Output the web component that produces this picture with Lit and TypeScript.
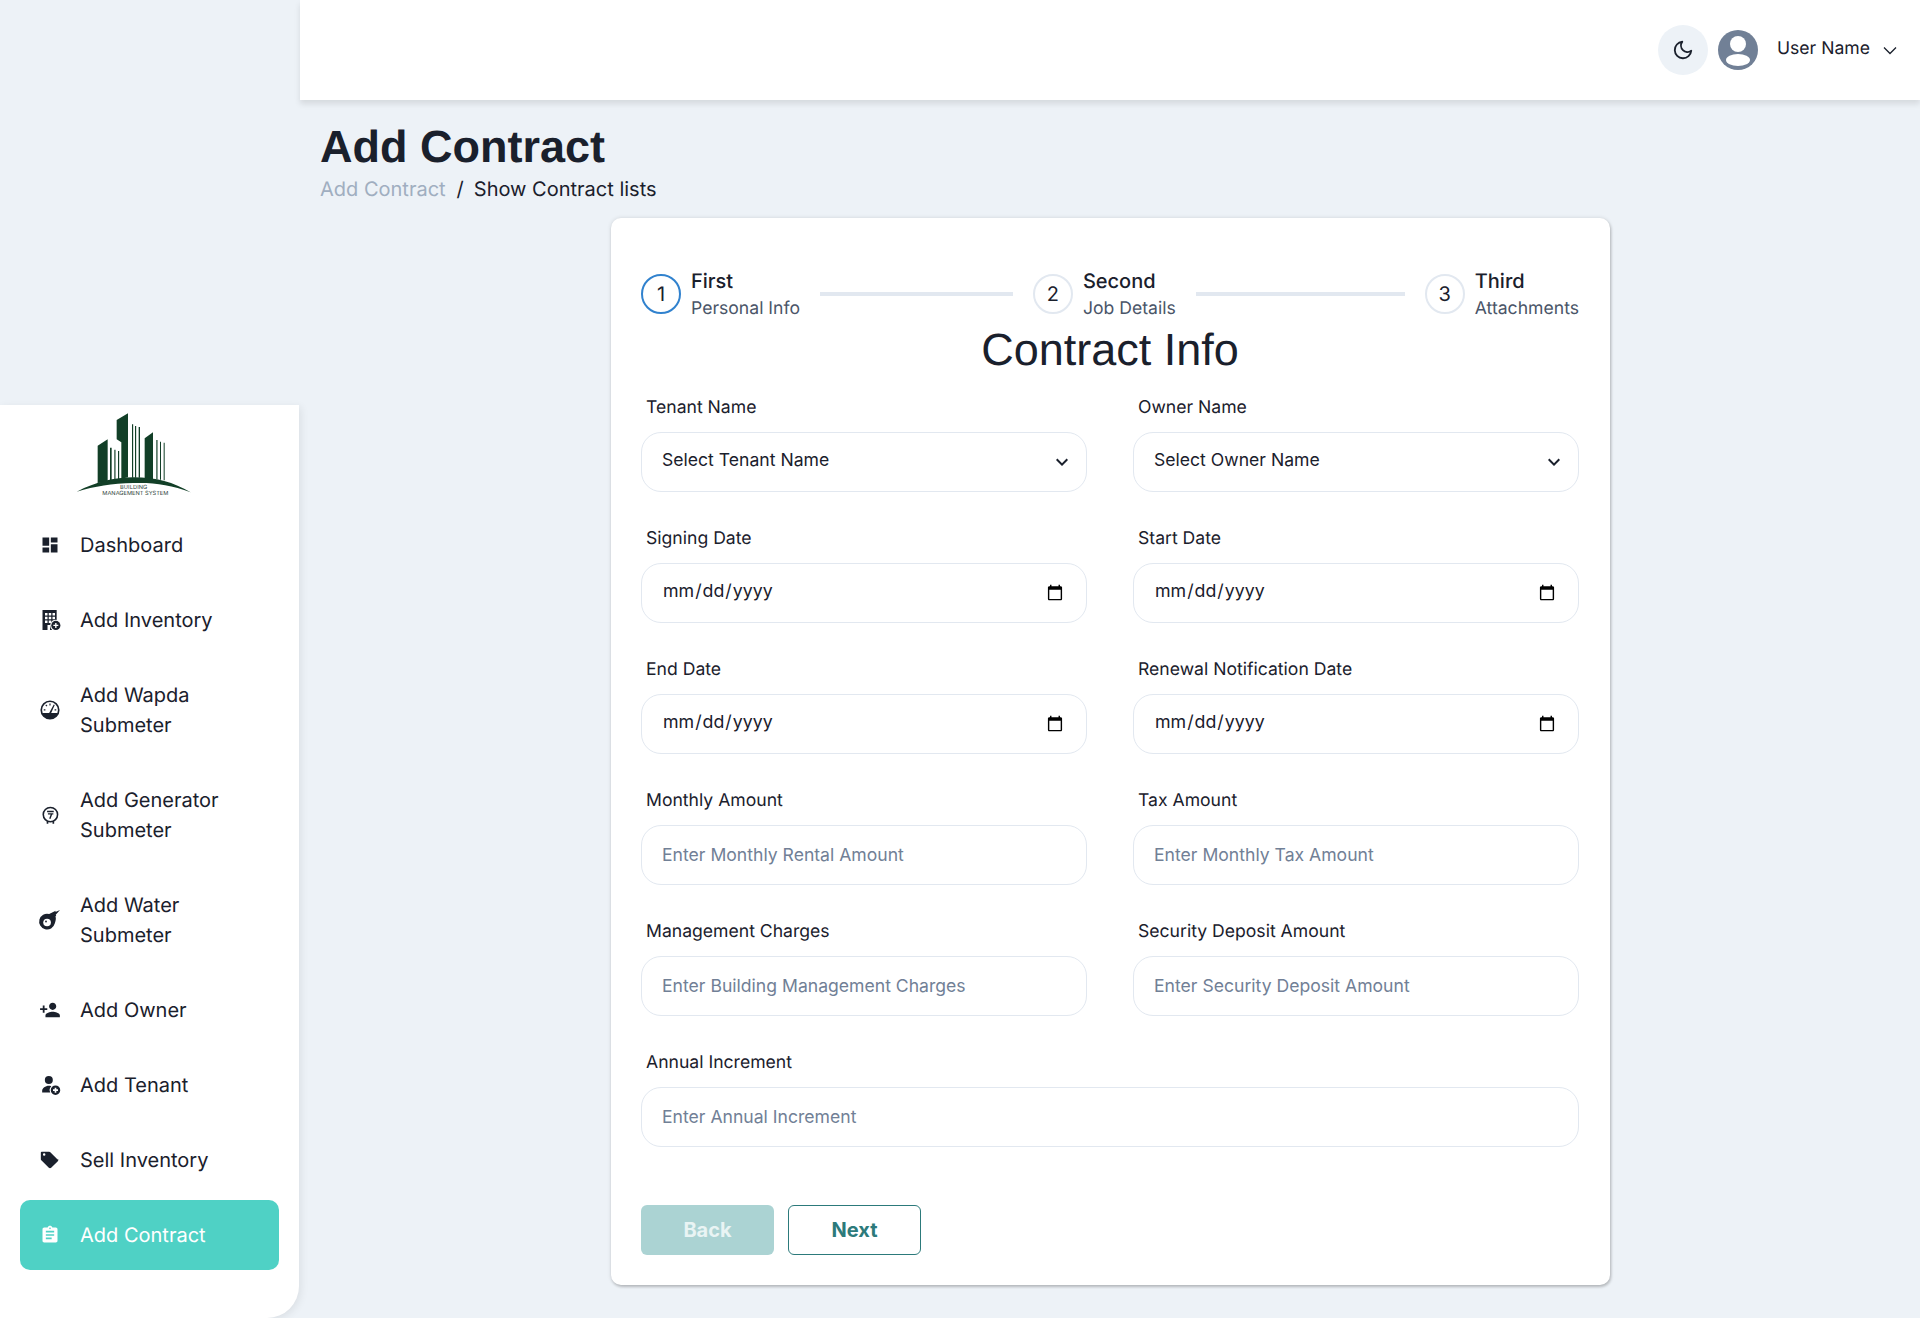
import { LitElement, html, css, svg } from 'lit';
import { customElement } from 'lit/decorators.js';

const ICONS: Record<string, unknown> = {
  dashboard: svg`<path d="M3 13h8V3H3v10zm0 8h8v-6H3v6zm10 0h8V11h-8v10zm0-18v6h8V3h-8z"/>`,
  building: svg`<g transform="translate(1 0)"><path fill-rule="evenodd" d="M2 0h17v24H2zM5 3.500v3h3v-3zm4.500 0v3h3v-3zm4.500 0v3h3v-3zM5 8v3h3V8zm4.500 0v3h3V8zM14 8v3h3V8zM5 12.500v3h3v-3zm4.500 0v3h3v-3zM14 12.500v3h3v-3zM8 18v6h3v-6z"/>
    <circle cx="18" cy="18.500" r="6.800" fill="#fff"/><circle cx="18" cy="18.500" r="5.500"/>
    <path fill="#fff" d="M17.200 15.500h1.600v2.200H21v1.600h-2.200v2.200h-1.600v-2.200H15v-1.600h2.200z"/></g>`,
  gauge: svg`<circle cx="12" cy="12" r="10.500" fill="none" stroke="currentColor" stroke-width="2"/>
    <path d="M2.500 15.500h19a10.300 10.300 0 0 1-19 0zM11 15.500l5.500-10 1.200.6-4.300 9.400z"/>
    <path d="M4.500 11h2v1.500h-2zM17.500 11h2v1.500h-2zM11.300 4.300h1.400v2.200h-1.400zM6.400 6.400l1-1 1.500 1.500-1 1z"/>`,
  rupee: svg`<g transform="translate(1 0)"><circle cx="11.500" cy="11.500" r="8.600" fill="none" stroke="currentColor" stroke-width="1.900"/>
    <path fill="none" stroke="currentColor" stroke-width="1.700" d="M7.500 7.800h8M8.500 10.600h6.500M12.800 11l-2 5.500"/>
    <path d="M7 19.500h2v3H7zM14 19.500h2v3h-2z"/></g>`,
  water: svg`<g transform="translate(1 0)"><path d="M23 0l-5.500 2.300.3-1.300L10 4.800a9.500 9.500 0 1 0 6.700 11.500c1-3 2-6 .8-8.800l1-.4-.6-1.500z"/>
    <circle cx="7.500" cy="15" r="4.600" fill="#fff"/><circle cx="6.200" cy="13.800" r="1.100"/></g>`,
  owner: svg`<path transform="translate(-1 -1) scale(1.080)" d="M15 12c2.200 0 4-1.800 4-4s-1.800-4-4-4-4 1.800-4 4 1.800 4 4 4zm-9-2V7H4v3H1v2h3v3h2v-3h3v-2H6zm9 4c-2.700 0-8 1.300-8 4v2h16v-2c0-2.700-5.300-4-8-4z"/>`,
  tenant: svg`<g transform="translate(.6 0)"><circle cx="10" cy="6" r="4.800"/><path d="M2 21v-2c0-3 4-6 8-6 1 0 2 .1 3 .4A6.500 6.500 0 0 0 11.700 21z"/>
    <path fill-rule="evenodd" d="M18 12.500a5.700 5.700 0 1 0 0 11.400 5.700 5.700 0 0 0 0-11.400zm-1 2.700h2v2h2v2h-2v2h-2v-2h-2v-2h2z"/></g>`,
  tag: svg`<path fill-rule="evenodd" d="M21.400 11.600l-9-9C12 2.200 11.500 2 11 2H2c-.6 0-1 .4-1 1v8c0 .6.200 1 .6 1.400l9 9c.4.400.9.600 1.400.600s1-.2 1.400-.6l8-8c.4-.4.600-.9.600-1.400s-.2-1-.6-1.400zM5 7a1.500 1.500 0 1 1 0-3 1.500 1.500 0 0 1 0 3z"/>`,
  clipboard: svg`<path d="M19 3h-4.200C14.400 1.800 13.300 1 12 1s-2.400.8-2.800 2H5c-1.100 0-2 .9-2 2v14c0 1.100.9 2 2 2h14c1.100 0 2-.9 2-2V5c0-1.100-.9-2-2-2zm-7 0c.6 0 1 .4 1 1s-.4 1-1 1-1-.4-1-1 .4-1 1-1zm2 14H7v-2h7v2zm3-4H7v-2h10v2zm0-4H7V7h10v2z"/>`,
};

type NavItem = { label: string; icon: string; active?: boolean };

const NAV: NavItem[] = [
  { label: 'Dashboard', icon: 'dashboard' },
  { label: 'Add Inventory', icon: 'building' },
  { label: 'Add Wapda Submeter', icon: 'gauge' },
  { label: 'Add Generator Submeter', icon: 'rupee' },
  { label: 'Add Water Submeter', icon: 'water' },
  { label: 'Add Owner', icon: 'owner' },
  { label: 'Add Tenant', icon: 'tenant' },
  { label: 'Sell Inventory', icon: 'tag' },
  { label: 'Add Contract', icon: 'clipboard', active: true },
];

const STEPS = [
  { title: 'First', sub: 'Personal Info' },
  { title: 'Second', sub: 'Job Details' },
  { title: 'Third', sub: 'Attachments' },
];

@customElement('app-root')
export class AppRoot extends LitElement {
  static styles = css`
    :host {
      display: block;
      width: 1920px;
      height: 1318px;
      overflow: hidden;
      background: #edf2f7;
      color: #1a202c;
      font-family: Inter, 'Liberation Sans', sans-serif;
      text-rendering: geometricPrecision;
    }
    .shell {
      display: flex;
      align-items: flex-start;
      height: 1318px;
    }
    .sidebar {
      flex: none;
      width: 299px;
      height: 913px;
      margin-top: 405px;
      padding: 0 20px;
      box-sizing: border-box;
      background: #fff;
      border-bottom-right-radius: 32px;
      box-shadow: 2px 2px 8px rgba(0, 0, 0, 0.08);
    }
    .logo {
      display: block;
      width: 150px;
      height: 100px;
      margin: 0 0 5px 40px;
    }
    .nav {
      display: flex;
      flex-direction: column;
      gap: 5px;
    }
    .nav-item {
      display: flex;
      align-items: center;
      gap: 20px;
      min-height: 70px;
      padding: 20px;
      box-sizing: border-box;
      border-radius: 10px;
      font-size: 20px;
      line-height: 30px;
    }
    .nav-item svg {
      flex: none;
      width: 20px;
      height: 20px;
      fill: currentColor;
      overflow: visible;
    }
    .nav-item.active {
      background: #4fd1c5;
      color: #fff;
    }
    .main {
      flex: 1;
      min-width: 0;
      margin-left: 1px;
    }
    .topbar {
      display: flex;
      align-items: center;
      justify-content: flex-end;
      height: 100px;
      padding-right: 22px;
      background: #fff;
      box-shadow: 0 4px 6px rgba(0, 0, 0, 0.1);
    }
    .moon {
      display: flex;
      align-items: center;
      justify-content: center;
      width: 50px;
      height: 50px;
      border-radius: 50%;
      background: #edf2f7;
    }
    .moon svg {
      width: 22px;
      height: 22px;
    }
    .avatar {
      width: 40px;
      height: 40px;
      margin-left: 10px;
    }
    .user {
      margin-left: 19px;
      margin-top: -4px;
      font-size: 17.6px;
      line-height: 27px;
    }
    .chev {
      width: 16px;
      height: 16px;
      margin-left: 12px;
    }
    .content {
      padding: 23px 0 0 20px;
    }
    h1 {
      margin: 0;
      font: 700 45px/48px 'Liberation Sans', Arial, sans-serif;
    }
    .crumbs {
      display: flex;
      gap: 10px;
      margin-top: 3px;
      font-size: 20px;
      line-height: 30px;
    }
    .crumbs .dim {
      margin-right: 1px;
      color: #a0aec0;
    }
    .card {
      width: 999px;
      height: 1067px;
      margin: 14px 0 0 291px;
      padding: 46px 31px 0 30px;
      box-sizing: border-box;
      background: #fff;
      border-radius: 10px;
      box-shadow: 0 0 4px rgba(0, 0, 0, 0.12), 1px 2px 3px rgba(0, 0, 0, 0.2);
    }
    .steps {
      display: flex;
      align-items: center;
      height: 60px;
    }
    .step {
      display: flex;
      align-items: center;
      gap: 10px;
      flex: 1;
    }
    .step:last-child {
      flex: none;
    }
    .num {
      display: flex;
      flex: none;
      align-items: center;
      justify-content: center;
      width: 40px;
      height: 40px;
      box-sizing: border-box;
      border: 2px solid #e2e8f0;
      border-radius: 50%;
      font-size: 20px;
    }
    .step.current .num {
      border-color: #3182ce;
    }
    .step-title {
      padding-top: 1px;
      font-size: 20px;
      line-height: 27px;
      font-weight: 500;
    }
    .step-sub {
      padding-top: 1px;
      font-size: 17.6px;
      line-height: 26px;
      color: #4a5568;
    }
    .sep {
      flex: 1;
      height: 4px;
      margin: 0 20px 0 10px;
      background: #e2e8f0;
    }
    h2 {
      margin: 0;
      padding-top: 1px;
      text-align: center;
      font: 400 45px/50px 'Liberation Sans', Arial, sans-serif;
    }
    .grid {
      display: grid;
      grid-template-columns: 446px 446px;
      column-gap: 46px;
      row-gap: 33.1px;
      margin-top: 19px;
    }
    .field.wide {
      grid-column: 1 / 3;
    }
    label {
      display: block;
      padding-left: 5px;
      margin-bottom: 11px;
      font-size: 17.6px;
      line-height: 27px;
    }
    .select-wrap {
      position: relative;
    }
    .select-wrap svg {
      position: absolute;
      top: 18px;
      right: 13px;
      width: 24px;
      height: 24px;
      fill: #1a202c;
      pointer-events: none;
    }
    input,
    select {
      display: block;
      width: 100%;
      height: 60px;
      padding: 0 20px 1px;
      box-sizing: border-box;
      background: #fff;
      border: 1px solid #e2e8f0;
      border-radius: 20px;
      color: #1a202c;
      font: 400 17.6px Inter, 'Liberation Sans', sans-serif;
      outline: none;
    }
    select {
      appearance: none;
      padding-bottom: 6px;
    }
    input[type='date'] {
      font-size: 17.8px;
    }
    input::-webkit-datetime-edit {
      margin-bottom: 5px;
    }
    input::placeholder {
      color: #718096;
      opacity: 1;
    }
    .actions {
      display: flex;
      gap: 14px;
      margin-top: 57.5px;
    }
    button {
      width: 133px;
      height: 50px;
      box-sizing: border-box;
      border-radius: 6px;
      font: 700 20px Inter, 'Liberation Sans', sans-serif;
    }
    .back {
      border: none;
      background: #abd3d3;
      color: #e9f4f4;
    }
    .next {
      border: 1px solid #2c7a7b;
      background: #fff;
      color: #2c7a7b;
    }
  `;

  private renderField(label: string, type: string, hint = '', wide = false) {
    return html`
      <div class="field ${wide ? 'wide' : ''}">
        <label>${label}</label>
        ${type === 'select'
          ? html`<div class="select-wrap">
              <select><option>${hint}</option></select>
              <svg viewBox="0 0 24 24"><path d="M16.590 8.590L12 13.170 7.410 8.590 6 10l6 6 6-6z" /></svg>
            </div>`
          : html`<input type=${type} placeholder=${hint} />`}
      </div>
    `;
  }

  render() {
    return html`
      <div class="shell">
        <aside class="sidebar">
          <svg class="logo" viewBox="0 0 450 300">
            <g fill="#123f27">
              <path d="M113 122l30-19v128l-30 3zM170 45l34-20v192l-20 4V112l-14-9zM254 100l25-18v142l-25-4z" />
              <path d="M150 128h5v98h-5zM163 134h3.500v90H163zM174 138h3.500v86H174zM216 58h3.500v160H216zM225 63h3.500v155H225zM236 66h4v152h-4zM289 105h3.500v117H289zM300 110h3v114h-3zM311 113h3v113h-3z" />
              <path d="M50 260c60-30 110-42 170-43 70 0 120 15 172 45-60-23-110-30-172-28-65 1-115 10-170 26z" />
            </g>
            <text x="221" y="252" text-anchor="middle" font-size="17" textLength="82" fill="#30453c" font-family="Inter">BUILDING</text>
            <text x="226" y="269" text-anchor="middle" font-size="17" textLength="198" fill="#30453c" font-family="Inter">MANAGEMENT SYSTEM</text>
          </svg>
          <nav class="nav">
            ${NAV.map(
              (n) => html`
                <div class="nav-item ${n.active ? 'active' : ''}">
                  <svg viewBox="0 0 24 24">${ICONS[n.icon]}</svg>
                  <span>${n.label}</span>
                </div>
              `,
            )}
          </nav>
        </aside>
        <div class="main">
          <header class="topbar">
            <div class="moon">
              <svg viewBox="0 0 24 24" fill="none" stroke="#1a202c" stroke-width="2" stroke-linecap="round" stroke-linejoin="round">
                <path d="M21 12.790A9 9 0 1 1 11.210 3 7 7 0 0 0 21 12.790z" />
              </svg>
            </div>
            <svg class="avatar" viewBox="0 0 40 40">
              <circle cx="20" cy="20" r="20" fill="#718096" />
              <circle cx="20" cy="14" r="8" fill="#fff" />
              <ellipse cx="20" cy="30" rx="12" ry="6" fill="#fff" />
            </svg>
            <span class="user">User Name</span>
            <svg class="chev" viewBox="0 0 16 16" fill="none" stroke="#1a202c" stroke-width="1.300">
              <path d="M2 5.500l6 6 6-6" />
            </svg>
          </header>
          <div class="content">
            <h1>Add Contract</h1>
            <div class="crumbs"><span class="dim">Add Contract</span><span>/</span><span>Show Contract lists</span></div>
            <section class="card">
              <div class="steps">
                ${STEPS.map(
                  (s, i) => html`
                    <div class="step ${i === 0 ? 'current' : ''}">
                      <div class="num">${i + 1}</div>
                      <div><div class="step-title">${s.title}</div><div class="step-sub">${s.sub}</div></div>
                      ${i < STEPS.length - 1 ? html`<div class="sep"></div>` : ''}
                    </div>
                  `,
                )}
              </div>
              <h2>Contract Info</h2>
              <div class="grid">
                ${this.renderField('Tenant Name', 'select', 'Select Tenant Name')}
                ${this.renderField('Owner Name', 'select', 'Select Owner Name')}
                ${this.renderField('Signing Date', 'date')}
                ${this.renderField('Start Date', 'date')}
                ${this.renderField('End Date', 'date')}
                ${this.renderField('Renewal Notification Date', 'date')}
                ${this.renderField('Monthly Amount', 'text', 'Enter Monthly Rental Amount')}
                ${this.renderField('Tax Amount', 'text', 'Enter Monthly Tax Amount')}
                ${this.renderField('Management Charges', 'text', 'Enter Building Management Charges')}
                ${this.renderField('Security Deposit Amount', 'text', 'Enter Security Deposit Amount')}
                ${this.renderField('Annual Increment', 'text', 'Enter Annual Increment', true)}
              </div>
              <div class="actions">
                <button class="back">Back</button>
                <button class="next">Next</button>
              </div>
            </section>
          </div>
        </div>
      </div>
    `;
  }
}
